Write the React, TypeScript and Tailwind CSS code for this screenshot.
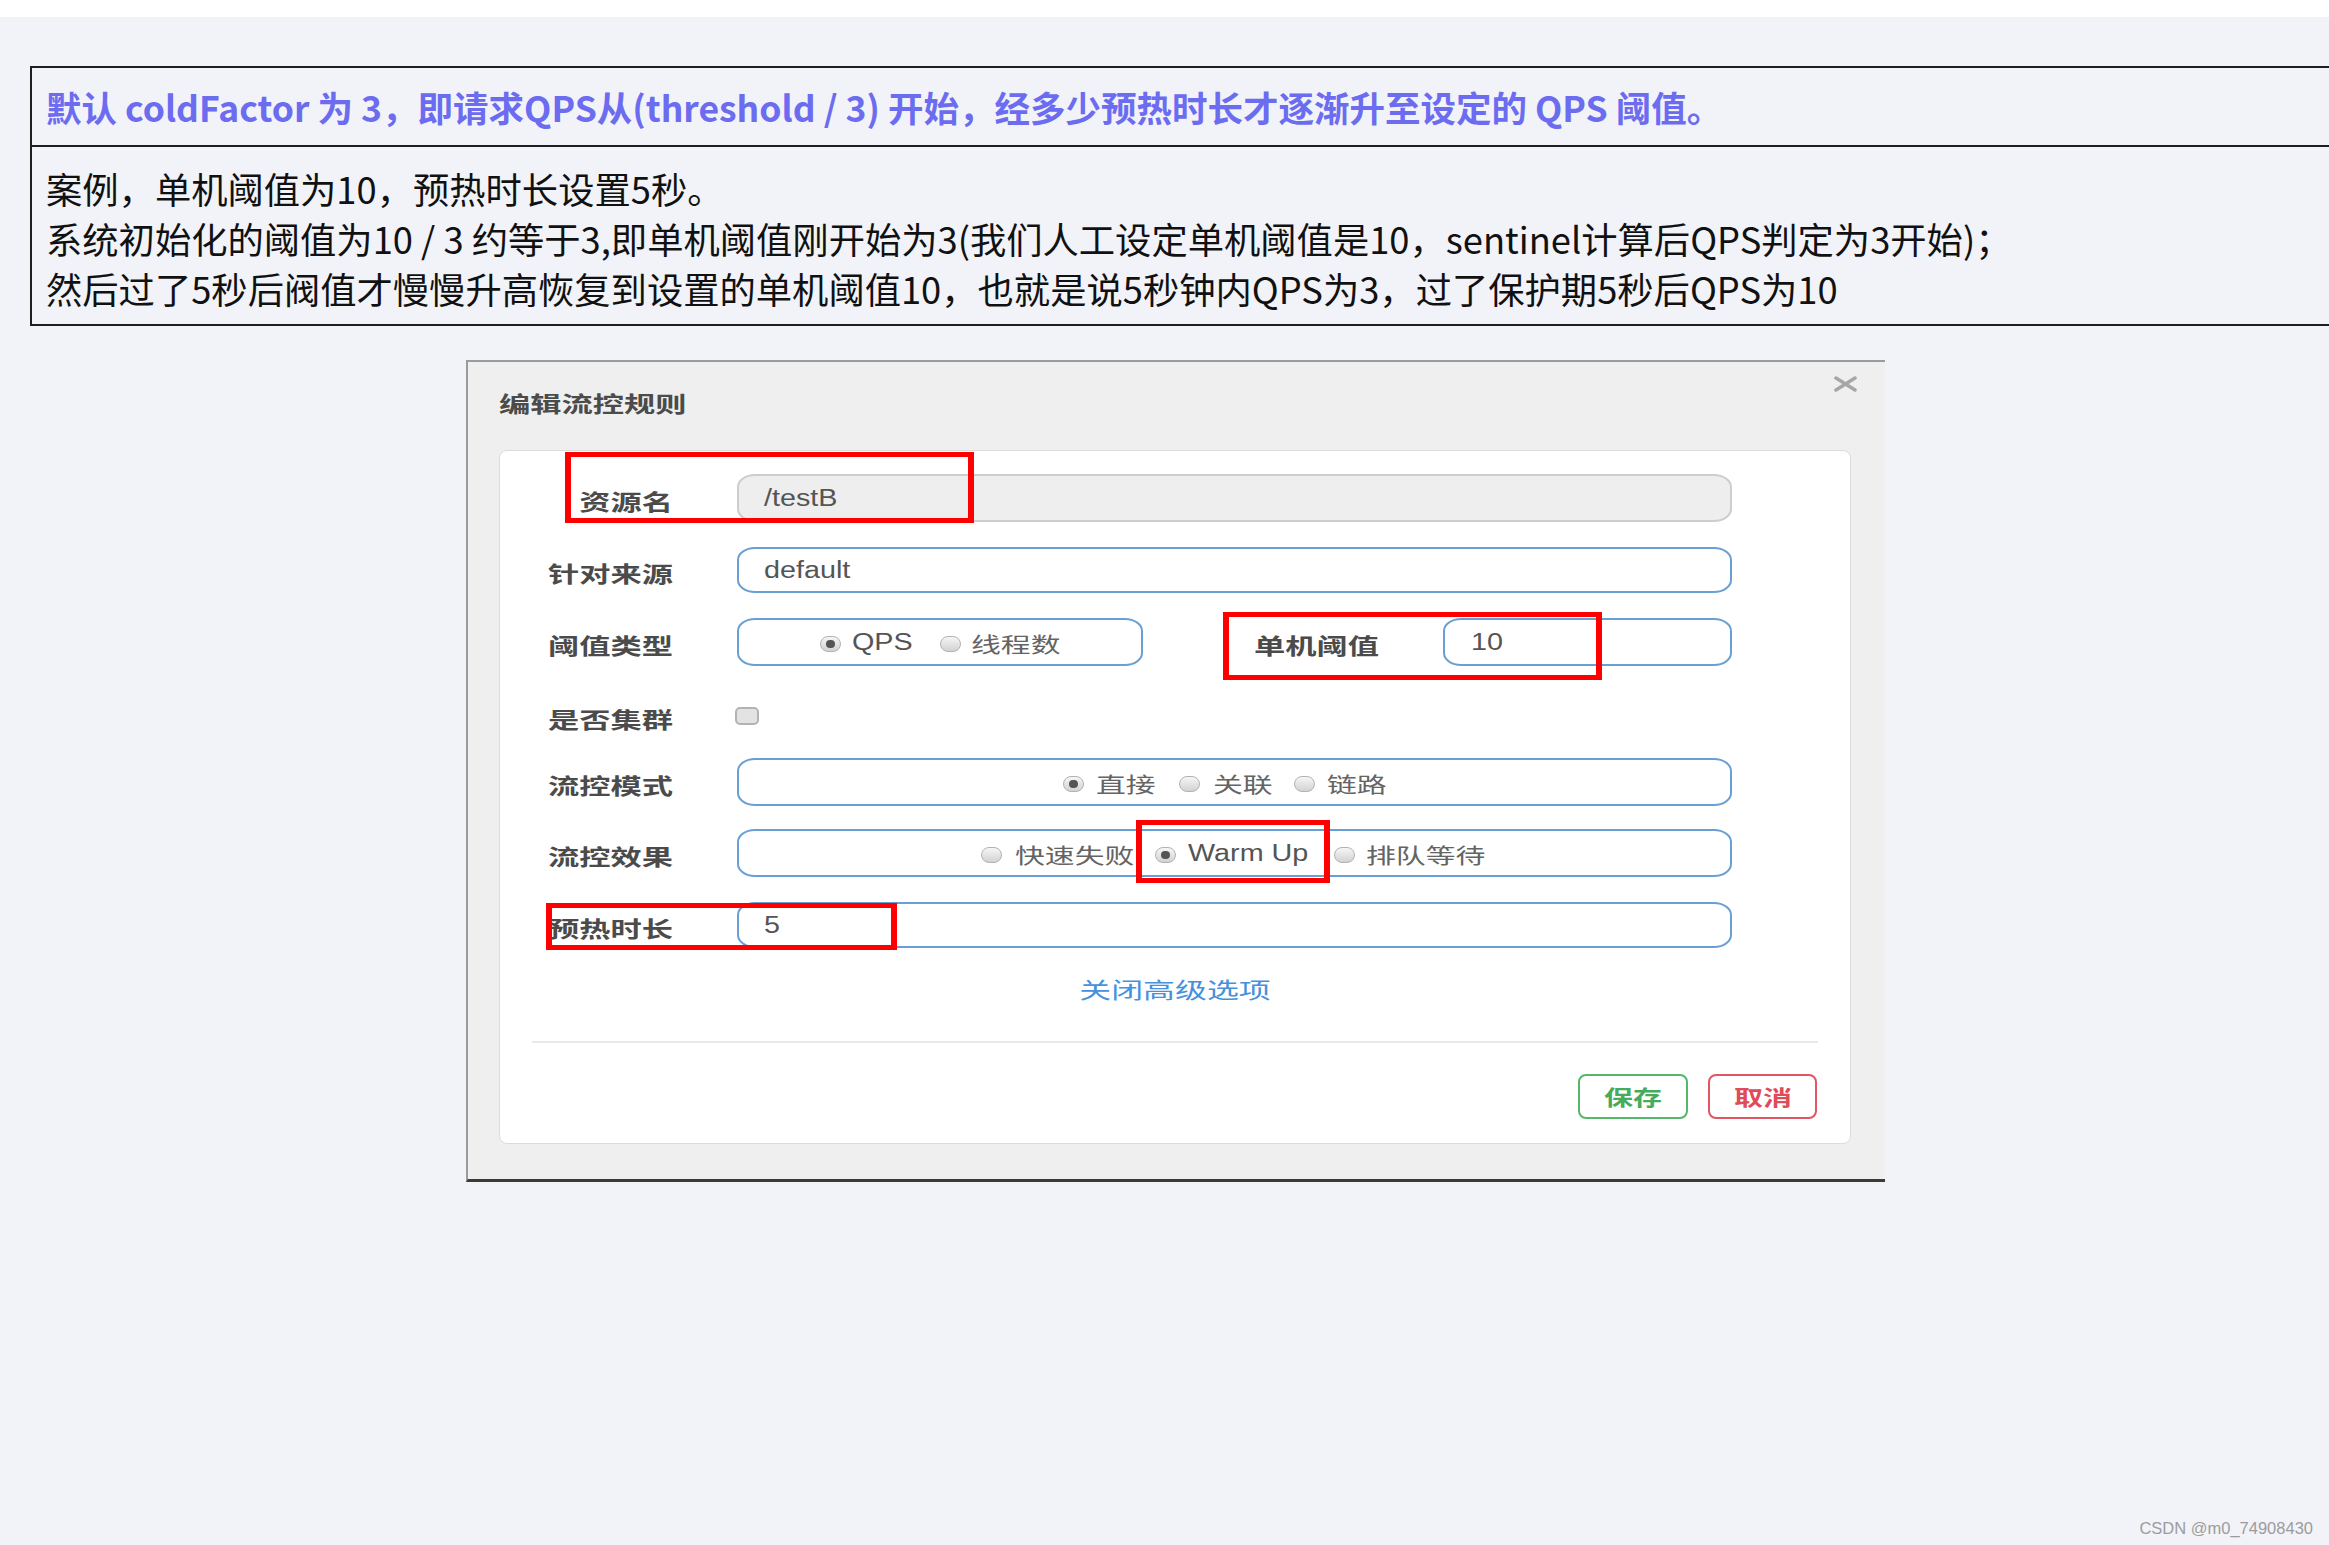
import React from "react";

const cjkFont = "font-['Noto_Sans_CJK_SC',sans-serif]";
const latFont = "font-['Liberation_Sans','Noto_Sans_CJK_SC',sans-serif]";

// stretched text styles (the dialog in the picture is a widened screenshot)
const labCn =
  "origin-right scale-x-[1.42] translate-y-[2px] text-[22px] font-bold leading-none text-[#4b4b4b] " + cjkFont;
const optCn =
  "origin-left scale-x-[1.42] translate-y-[3px] text-[21px] leading-none text-[#646464] " + cjkFont;
const latCn =
  "origin-left scale-x-[1.25] translate-y-[1px] text-[23px] leading-none text-[#555] " + latFont;

function Sx({ box, inner, children }: { box: string; inner: string; children: React.ReactNode }) {
  return (
    <span className={"block shrink-0 " + box}>
      <span className={"inline-block whitespace-nowrap " + inner}>{children}</span>
    </span>
  );
}

function Radio({ checked }: { checked?: boolean }) {
  return (
    <span className="flex h-[16px] w-[21px] shrink-0 translate-y-[2px] items-center justify-center rounded-full border border-[#b3b3b3] bg-linear-to-b from-[#f6f6f6] to-[#d2d2d2]">
      {checked && <span className="h-[8px] w-[9px] rounded-full bg-[#555]" />}
    </span>
  );
}

function Label({ text }: { text: string }) {
  return (
    <div className="flex w-[173px] shrink-0 justify-end">
      <span className={"inline-block whitespace-nowrap " + labCn}>{text}</span>
    </div>
  );
}

function RedBox({ cls }: { cls: string }) {
  return <div className={"pointer-events-none absolute border-x-[6px] border-y-[5px] border-[#ff0000] " + cls} />;
}

export default function App() {
  return (
    <div className={"relative h-[1545px] w-full overflow-hidden bg-[#f2f3f8] " + cjkFont}>
      <div className="h-[17px] bg-white" />

      {/* NOTE TABLE */}
      <div className="ml-[30px] mt-[49px] border-y-2 border-l-2 border-[#1e1e1e]">
        <div className="flex h-[79px] items-center border-b-2 border-[#1e1e1e] pl-[14px]">
          <span className="whitespace-nowrap text-[35.5px] font-bold text-[#6c6cf0]">
            默认 coldFactor 为 3，即请求QPS从(threshold / 3) 开始，经多少预热时长才逐渐升至设定的 QPS 阈值。
          </span>
        </div>
        <div className="whitespace-nowrap pb-[11px] pl-[14px] pt-[16px] text-[36.3px] leading-[50px] text-[#111]">
          <div>案例，单机阈值为10，预热时长设置5秒。</div>
          <div>系统初始化的阈值为10 / 3 约等于3,即单机阈值刚开始为3(我们人工设定单机阈值是10，sentinel计算后QPS判定为3开始)；</div>
          <div>然后过了5秒后阀值才慢慢升高恢复到设置的单机阈值10，也就是说5秒钟内QPS为3，过了保护期5秒后QPS为10</div>
        </div>
      </div>

      {/* DIALOG SCREENSHOT */}
      <div className="ml-[466px] mt-[34px] w-[1419px] border-b-[3px] border-l-2 border-t-2 border-b-[#3b3b33] border-l-[#9a9a9a] border-t-[#9c9c9c] bg-[#efefef]">
        <div className="flex h-[88px] items-start justify-between">
          <span className="ml-[31px] mt-[29px] inline-block origin-left scale-x-[1.42] whitespace-nowrap text-[22px] font-bold leading-none text-[#4b4b4b]">
            编辑流控规则
          </span>
          <svg className="mr-[27px] mt-[14px]" width="25" height="16" viewBox="0 0 25 16">
            <path d="M3 2 L22 14 M3 14 L22 2" stroke="#a6a6a6" strokeWidth="3.5" strokeLinecap="round" />
          </svg>
        </div>

        <div className="relative ml-[31px] w-[1352px] rounded-[8px] border border-[#dcdcdc] bg-white pb-[24px] pt-[23px]">
          {/* 资源名 */}
          <div className="flex h-[48px] items-center">
            <Label text="资源名" />
            <div className="ml-[64px] flex h-[48px] w-[995px] items-center rounded-[18px_/_13px] border-2 border-[#cdcdcd] bg-[#eeeeee] pl-[25px]">
              <Sx box="w-[80px]" inner={latCn}>/testB</Sx>
            </div>
          </div>

          {/* 针对来源 */}
          <div className="mt-[25px] flex h-[46px] items-center">
            <Label text="针对来源" />
            <div className="ml-[64px] flex h-[46px] w-[995px] items-center rounded-[18px_/_13px] border-2 border-[#6a9fd6] pl-[25px]">
              <Sx box="w-[90px]" inner={latCn}>default</Sx>
            </div>
          </div>

          {/* 阈值类型 + 单机阈值 */}
          <div className="mt-[25px] flex h-[48px] items-center">
            <Label text="阈值类型" />
            <div className="ml-[64px] flex h-[48px] w-[406px] items-center rounded-[18px_/_13px] border-2 border-[#6a9fd6] pl-[81px]">
              <Radio checked />
              <Sx box="ml-[11px] w-[62px]" inner={latCn}>QPS</Sx>
              <span className="ml-[26px]"><Radio /></span>
              <Sx box="ml-[10px] w-[88px]" inner={optCn}>线程数</Sx>
            </div>
            <div className="flex w-[236px] shrink-0 justify-end">
              <span className={"inline-block whitespace-nowrap " + labCn}>单机阈值</span>
            </div>
            <div className="ml-[64px] flex h-[48px] w-[289px] items-center rounded-[18px_/_13px] border-2 border-[#6a9fd6] pl-[26px]">
              <Sx box="w-[40px]" inner={latCn}>10</Sx>
            </div>
          </div>

          {/* 是否集群 */}
          <div className="mt-[24px] flex h-[52px] items-center">
            <Label text="是否集群" />
            <span className="ml-[62px] h-[18px] w-[24px] rounded-[5px] border-2 border-[#b3b3b3] bg-[#e3e3e3]" />
          </div>

          {/* 流控模式 */}
          <div className="mt-[16px] flex h-[48px] items-center">
            <Label text="流控模式" />
            <div className="ml-[64px] flex h-[48px] w-[995px] items-center rounded-[18px_/_13px] border-2 border-[#6a9fd6] pl-[324px]">
              <Radio checked />
              <Sx box="ml-[12px] w-[60px]" inner={optCn}>直接</Sx>
              <span className="ml-[23px]"><Radio /></span>
              <Sx box="ml-[13px] w-[57px]" inner={optCn}>关联</Sx>
              <span className="ml-[24px]"><Radio /></span>
              <Sx box="ml-[12px] w-[58px]" inner={optCn}>链路</Sx>
            </div>
          </div>

          {/* 流控效果 */}
          <div className="mt-[23px] flex h-[48px] items-center">
            <Label text="流控效果" />
            <div className="ml-[64px] flex h-[48px] w-[995px] items-center rounded-[18px_/_13px] border-2 border-[#6a9fd6] pl-[242px]">
              <Radio />
              <Sx box="ml-[13px] w-[116px]" inner={optCn}>快速失败</Sx>
              <span className="ml-[24px]"><Radio checked /></span>
              <Sx box="ml-[12px] w-[121px]" inner={latCn}>Warm Up</Sx>
              <span className="ml-[25px]"><Radio /></span>
              <Sx box="ml-[11px] w-[119px]" inner={optCn}>排队等待</Sx>
            </div>
          </div>

          {/* 预热时长 */}
          <div className="mt-[25px] flex h-[46px] items-center">
            <Label text="预热时长" />
            <div className="ml-[64px] flex h-[46px] w-[995px] items-center rounded-[18px_/_13px] border-2 border-[#6a9fd6] pl-[25px]">
              <Sx box="w-[20px]" inner={latCn}>5</Sx>
            </div>
          </div>

          <div className="mt-[29px] flex justify-center">
            <span className="inline-block origin-center scale-x-[1.45] text-[22px] leading-none text-[#4690dc]">
              关闭高级选项
            </span>
          </div>

          <div className="mx-[32px] mt-[42px] h-[2px] bg-[#e9e9e9]" />

          <div className="mr-[33px] mt-[31px] flex justify-end gap-[20px]">
            <div className="flex h-[45px] w-[110px] items-center justify-center rounded-[8px] border-2 border-[#55b76a]">
              <span className="inline-block origin-center scale-x-[1.38] text-[21px] font-bold leading-none text-[#47ab5c]">保存</span>
            </div>
            <div className="flex h-[45px] w-[109px] items-center justify-center rounded-[8px] border-2 border-[#e25563]">
              <span className="inline-block origin-center scale-x-[1.38] text-[21px] font-bold leading-none text-[#e04b58]">取消</span>
            </div>
          </div>

          {/* annotation boxes */}
          <RedBox cls="left-[65px] top-[1px] h-[71px] w-[409px]" />
          <RedBox cls="left-[723px] top-[161px] h-[68px] w-[379px]" />
          <RedBox cls="left-[636px] top-[369px] h-[63px] w-[194px]" />
          <RedBox cls="left-[46px] top-[452px] h-[47px] w-[351px]" />
        </div>
        <div className="h-[35px]" />
      </div>

      <div className={"absolute bottom-[9px] right-[16px] text-[16.5px] leading-none text-[#9c9c9c] " + latFont}>
        CSDN @m0_74908430
      </div>
    </div>
  );
}
